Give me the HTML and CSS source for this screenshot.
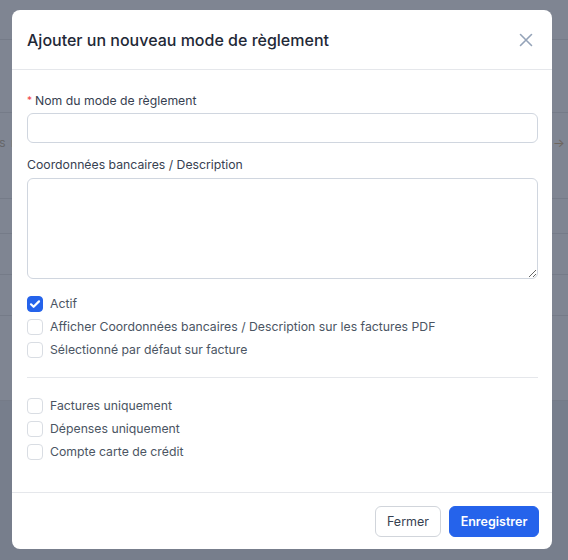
FILE: index.html
```html
<!DOCTYPE html>
<html lang="fr">
<head>
<meta charset="utf-8">
<title>Ajouter un nouveau mode de règlement</title>
<link rel="stylesheet" href="styles.css">
</head>
<body>
<div class="backdrop">
  <div class="bg-row h39"></div>
  <div class="bg-row h72"></div>
  <div class="bg-row h85 bg-content"><span class="bg-text">s r</span><span class="bg-arrow">→</span></div>
  <div class="bg-row h34"></div>
  <div class="bg-row h40"></div>
  <div class="bg-row h40"></div>
  <div class="bg-row h84"></div>
  <div class="bg-rest"></div>
</div>

<div class="modal">
  <div class="modal-header">
    <h2 class="modal-title">Ajouter un nouveau mode de règlement</h2>
    <button class="close-btn" aria-label="Fermer">
      <svg width="14" height="14" viewBox="0 0 14 14"><path d="M1.5 1.5L12.5 12.5M12.5 1.5L1.5 12.5" stroke="#94a3b8" stroke-width="1.6" stroke-linecap="round" fill="none"/></svg>
    </button>
  </div>
  <div class="modal-body">
    <label class="field-label"><span class="req">*</span>Nom du mode de règlement</label>
    <input class="text-input" type="text">
    <label class="field-label second">Coordonnées bancaires / Description</label>
    <textarea class="text-area"></textarea>

    <div class="checks first-group">
      <div class="check-row"><span class="box checked"><svg width="16" height="16" viewBox="0 0 16 16"><path d="M4 8.3l2.6 2.5L12 5.4" stroke="#fff" stroke-width="2.2" fill="none" stroke-linecap="round" stroke-linejoin="round"/></svg></span><span class="check-label">Actif</span></div>
      <div class="check-row"><span class="box"></span><span class="check-label">Afficher Coordonnées bancaires / Description sur les factures PDF</span></div>
      <div class="check-row"><span class="box"></span><span class="check-label">Sélectionné par défaut sur facture</span></div>
    </div>
    <hr class="divider">
    <div class="checks">
      <div class="check-row"><span class="box"></span><span class="check-label">Factures uniquement</span></div>
      <div class="check-row"><span class="box"></span><span class="check-label">Dépenses uniquement</span></div>
      <div class="check-row"><span class="box"></span><span class="check-label">Compte carte de crédit</span></div>
    </div>
  </div>
  <div class="modal-footer">
    <button class="btn btn-secondary">Fermer</button>
    <button class="btn btn-primary">Enregistrer</button>
  </div>
</div>
</body>
</html>
```

FILE: styles.css
```css
* { box-sizing: border-box; }
html, body {
  margin: 0;
  padding: 0;
  width: 568px;
  height: 560px;
  overflow: hidden;
  font-family: Inter, "Noto Sans", "Liberation Sans", sans-serif;
}
body { background: #777e8c; position: relative; }

.backdrop {
  display: flex;
  flex-direction: column;
  height: 560px;
}
.bg-row {
  background: #7f8592;
  border-bottom: 1px solid #757b88;
  flex: none;
}
.h39 { height: 40px; }
.h72 { height: 73px; }
.h85 { height: 86px; }
.h34 { height: 35px; }
.h40 { height: 41px; }
.h84 { height: 85px; }
.bg-rest { flex: 1; background: #777e8c; }
.bg-content {
  display: flex;
  justify-content: space-between;
  align-items: flex-start;
  padding-top: 21px;
  font-size: 12.5px;
  line-height: 18px;
  color: #66676a;
}
.bg-text { margin-left: -1px; letter-spacing: 1px; }
.bg-arrow { margin-right: 3px; color: #6e665e; }

.modal {
  position: absolute;
  left: 12px;
  top: 10px;
  width: 540px;
  height: 539px;
  background: #ffffff;
  border-radius: 8px;
  display: flex;
  flex-direction: column;
}
.modal-header {
  height: 60px;
  border-bottom: 1px solid #e5e7eb;
  display: flex;
  align-items: center;
  justify-content: space-between;
  padding: 0 19px 0 15px;
  flex: none;
}
.modal-title {
  margin: 0;
  font-size: 16px;
  font-weight: 500;
  color: #1f2937;
}
.close-btn {
  border: 0;
  background: none;
  padding: 0;
  width: 14px;
  height: 14px;
  display: flex;
}

.modal-body {
  flex: 1;
  padding: 21px 14px 0 15px;
  display: flex;
  flex-direction: column;
}
.field-label {
  display: block;
  font-size: 12.25px;
  line-height: 20px;
  color: #374151;
}
.field-label.second { margin-top: 12px; }
.req {
  color: #ef4444;
  font-size: 10px;
  margin-right: 3px;
  position: relative;
  top: -1px;
}
.text-input {
  margin-top: 2px;
  height: 30px;
  width: 100%;
  border: 1px solid #d0d6df;
  border-radius: 6px;
  background: #fff;
  font: inherit;
}
.text-area {
  margin-top: 3px;
  height: 101px;
  width: 100%;
  border: 1px solid #d0d6df;
  border-radius: 6px;
  background: #fff;
  font: inherit;
  display: block;
}
.checks { display: flex; flex-direction: column; }
.first-group { margin-top: 13px; }
.check-row {
  height: 23px;
  display: flex;
  align-items: center;
  gap: 7px;
}
.box {
  width: 16px;
  height: 16px;
  border: 1px solid #d9dde3;
  border-radius: 4px;
  background: #fff;
  flex: none;
  display: flex;
}
.box.checked {
  background: #2563eb;
  border-color: #2563eb;
}
.box.checked svg { margin: -1px; }
.check-label {
  font-size: 12.25px;
  color: #4b5563;
}
.divider {
  border: 0;
  border-top: 1px solid #e5e7eb;
  margin: 16px 0 16px;
}

.modal-footer {
  flex: none;
  border-top: 1px solid #e5e7eb;
  padding: 13px 13px 12px 0;
  display: flex;
  justify-content: flex-end;
  gap: 8px;
}
.btn {
  height: 31px;
  border-radius: 6px;
  font-family: inherit;
  font-size: 12.5px;
  cursor: pointer;
}
.btn-secondary {
  width: 66px;
  background: #fff;
  border: 1px solid #d1d5db;
  color: #374151;
  font-weight: 400;
}
.btn-primary {
  width: 90px;
  background: #2563eb;
  border: 1px solid #2563eb;
  color: #fff;
  font-weight: 600;
}
```
